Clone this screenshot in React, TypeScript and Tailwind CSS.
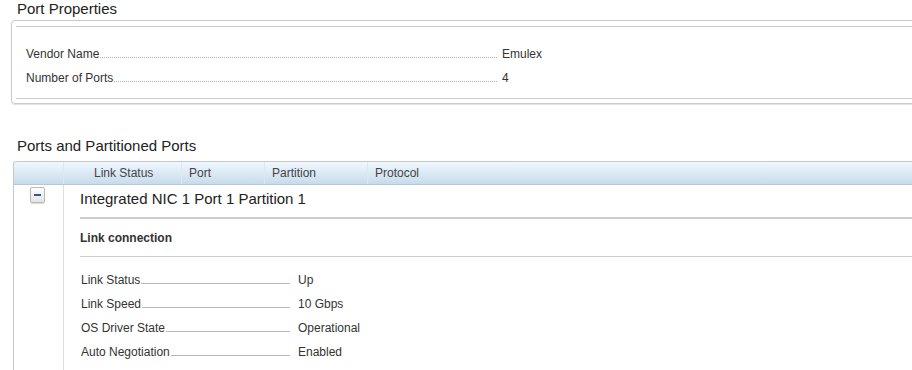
import React from 'react';

const portProps = [
  { label: 'Vendor Name', value: 'Emulex' },
  { label: 'Number of Ports', value: '4' },
];

const linkProps = [
  { label: 'Link Status', value: 'Up' },
  { label: 'Link Speed', value: '10 Gbps' },
  { label: 'OS Driver State', value: 'Operational' },
  { label: 'Auto Negotiation', value: 'Enabled' },
];

const App: React.FC = () => {
  return (
    <div className="h-[370px] w-[912px] overflow-hidden bg-white font-['Liberation_Sans',Arial,sans-serif] text-[12px] text-[#333]">
      {/* Port Properties */}
      <h2 className="pl-[17px] text-[15px] leading-[17px] text-[#222]">Port Properties</h2>
      <div className="ml-[11px] mt-[3px] w-[920px] rounded-[4px] border border-[#c8cbd0] px-[4px] pb-[4px] pt-[5px] shadow-[0_1px_1px_rgba(0,0,0,0.12)]">
        <div className="border-t border-[#c8cbd0]" />
        <div className="mt-[15px] pl-[10px]">
          {portProps.map((row) => (
            <div key={row.label} className="flex h-6 items-baseline leading-6">
              <div className="flex w-[471px] items-baseline">
                <span>{row.label}</span>
                <span className="ml-px flex-1 border-b border-dotted border-[#b0b0b0]" />
              </div>
              <span className="ml-[5px]">{row.value}</span>
            </div>
          ))}
        </div>
        <div className="mt-[8px] border-t border-[#c8cbd0]" />
      </div>

      {/* Ports and Partitioned Ports */}
      <h2 className="mt-[33px] pl-[17px] text-[15px] leading-[17px] text-[#222]">Ports and Partitioned Ports</h2>
      <div className="ml-[13px] mt-[7px] rounded-tl-[3px] border-l border-[#c8c8c8]">
        <div className="flex h-[24px] items-center rounded-tl-[3px] border-y border-t-[#c3c6ca] border-b-[#b5c8da] bg-gradient-to-b from-[#f0f7ff] to-[#c8dbeb] text-[#444]">
          <div className="h-full w-[50px] border-r border-[#dfe8f1]" />
          <div className="flex h-full w-[118px] items-center border-r border-[#dfe8f1] pl-[30px]">Link Status</div>
          <div className="flex h-full w-[83px] items-center border-r border-[#dfe8f1] pl-[7px]">Port</div>
          <div className="flex h-full w-[103px] items-center border-r border-[#dfe8f1] pl-[7px]">Partition</div>
          <div className="flex h-full flex-1 items-center pl-[7px]">Protocol</div>
        </div>

        <div className="flex h-[200px]">
          <div className="w-[50px] border-r border-[#dcdcdc] pl-[16px] pt-[2px]">
            <div className="flex h-[16px] w-[15px] items-center justify-center rounded-[2px] border border-[#b8b8b8] bg-gradient-to-b from-white to-[#e4e4e4] shadow-[0_1px_1px_rgba(0,0,0,0.15)]">
              <span className="h-[2px] w-[7px] bg-[#36598a]" />
            </div>
          </div>
          <div className="flex-1 pl-[16px]">
            <div className="pb-[8px] pt-[4px] text-[15px] leading-[20px] text-[#222]">Integrated NIC 1 Port 1 Partition 1</div>
            <div className="border-t-2 border-[#cccccc]" />
            <div className="mt-[11px] font-bold leading-[16px]">Link connection</div>
            <div className="mt-[10px] border-t border-[#cccccc]" />
            <div className="mt-[11px] pl-px">
              {linkProps.map((row) => (
                <div key={row.label} className="flex h-6 items-baseline leading-6">
                  <div className="flex w-[209px] items-baseline">
                    <span>{row.label}</span>
                    <span className="ml-px flex-1 border-b border-[#b8b8b8]" />
                  </div>
                  <span className="ml-[8px]">{row.value}</span>
                </div>
              ))}
            </div>
          </div>
        </div>
      </div>
    </div>
  );
};

export default App;
